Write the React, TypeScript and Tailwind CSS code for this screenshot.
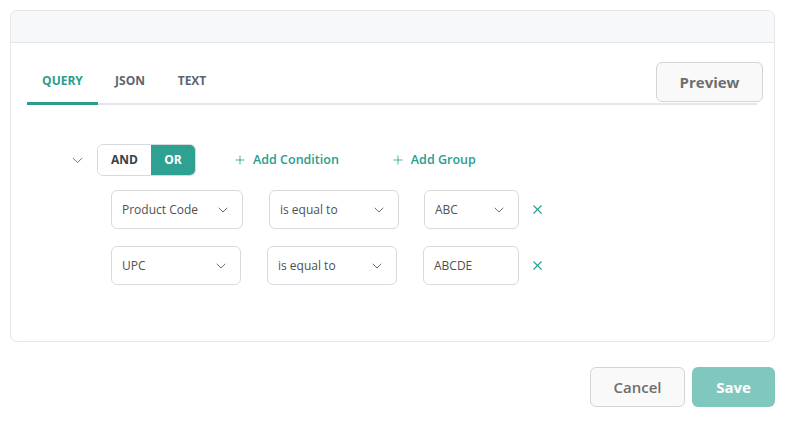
import { ChevronDown, Plus, X } from "lucide-react";

const font = { fontFamily: '"Open Sans", "Noto Sans", sans-serif' };

function Select({ value, width, chevron = true }: { value: string; width: string; chevron?: boolean }) {
  return (
    <div
      className={`${width} h-[39px] flex items-center justify-between pl-[10px] pr-[11px] border border-[#d6dadf] rounded-[6px] bg-white text-[12px] text-[#505050]`}
    >
      <span>{value}</span>
      {chevron && <ChevronDown size={16} strokeWidth={1.5} className="text-[#6b7280]" />}
    </div>
  );
}

export default function App() {
  return (
    <div className="pt-[10px] pl-[10px] pr-[17px] bg-white min-h-screen" style={font}>
      {/* Card */}
      <div className="border border-[#e4e6ea] rounded-[7px] overflow-hidden">
        <div className="h-[32px] bg-[#f7f8fa] border-b border-[#e2e4e8]" />

        <div className="pt-[19px] pb-[56px]">
          {/* Tabs */}
          <div className="ml-[16px] mr-[17px] border-b-2 border-[#e3e6ea] flex items-end justify-between">
            <div className="flex text-[12px] font-bold">
              <div className="w-[71px] text-center pb-[12px] -mb-[2px] border-b-[3px] border-[#2a9d8f] text-[#2a9d8f]">QUERY</div>
              <div className="w-[64px] text-center pb-[13px] text-[#5d6470]">JSON</div>
              <div className="w-[60px] text-center pb-[13px] text-[#5d6470]">TEXT</div>
            </div>
            <button className="w-[107px] h-[40px] mb-[1px] -mr-[6px] bg-[#f9f9f9] border border-[#d4d4d4] rounded-[6px] text-[15px] font-bold text-[#6e6e6e]">
              Preview
            </button>
          </div>

          {/* Query builder */}
          <div className="pl-[58px] pt-[39px]">
            <div className="flex items-center h-[32px]">
              <ChevronDown size={17} strokeWidth={1.4} className="text-[#6b7280] mr-[11px]" />
              <div className="flex h-[32px] rounded-[6px] border border-[#d6dadf] overflow-hidden text-[12px] font-bold">
                <div className="w-[53px] flex items-center justify-center bg-white text-[#3b3f47]">AND</div>
                <div className="w-[44px] flex items-center justify-center bg-[#2ea192] text-white">OR</div>
              </div>
              <div className="flex items-center ml-[37px] text-[12.5px] font-semibold text-[#2a9d8f]">
                <Plus size={14} strokeWidth={1.4} className="mr-[6px]" />
                Add Condition
              </div>
              <div className="flex items-center ml-[52px] text-[12.5px] font-semibold text-[#2a9d8f]">
                <Plus size={14} strokeWidth={1.4} className="mr-[6px]" />
                Add Group
              </div>
            </div>

            <div className="pl-[42px] pt-[14px] flex flex-col gap-[17px]">
              <div className="flex items-center">
                <Select value="Product Code" width="w-[132px]" />
                <div className="w-[26px]" />
                <Select value="is equal to" width="w-[130px]" />
                <div className="w-[25px]" />
                <Select value="ABC" width="w-[95px]" />
                <X size={15} strokeWidth={1.8} className="text-[#2a9d8f] ml-[11px]" />
              </div>
              <div className="flex items-center">
                <Select value="UPC" width="w-[130px]" />
                <div className="w-[26px]" />
                <Select value="is equal to" width="w-[130px]" />
                <div className="w-[26px]" />
                <Select value="ABCDE" width="w-[96px]" chevron={false} />
                <X size={15} strokeWidth={1.8} className="text-[#2a9d8f] ml-[11px]" />
              </div>
            </div>
          </div>
        </div>
      </div>

      {/* Footer */}
      <div className="flex justify-end gap-[7px] mt-[25px]">
        <button className="w-[95px] h-[40px] bg-[#f9f9f9] border border-[#d4d4d4] rounded-[6px] text-[15px] font-semibold text-[#6e6e6e]">
          Cancel
        </button>
        <button className="w-[83px] h-[40px] bg-[#80c8be] rounded-[6px] text-[15px] font-bold text-white">
          Save
        </button>
      </div>
    </div>
  );
}
